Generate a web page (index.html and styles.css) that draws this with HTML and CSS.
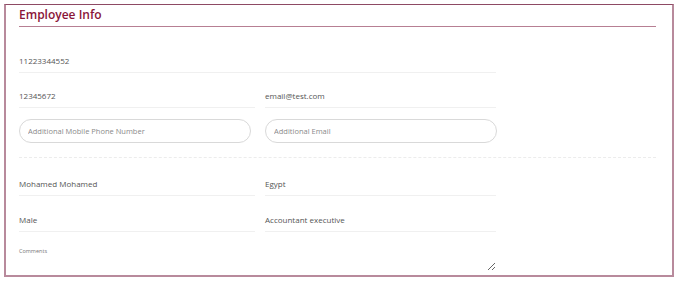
FILE: index.html
```html
<!DOCTYPE html>
<html>
<head>
<meta charset="utf-8">
<link rel="stylesheet" href="styles.css">
</head>
<body>
<section class="card">
  <h2 class="card-title">Employee Info</h2>
  <div class="grid">
    <div class="field span2">11223344552</div>
    <div class="field">12345672</div>
    <div class="field">email@test.com</div>
    <div class="input-wrap"><input class="pill pill-left" type="text" placeholder="Additional Mobile Phone Number"></div>
    <div class="input-wrap"><input class="pill" type="text" placeholder="Additional Email"></div>
  </div>
  <hr class="divider">
  <div class="grid second">
    <div class="field">Mohamed Mohamed</div>
    <div class="field">Egypt</div>
    <div class="field">Male</div>
    <div class="field">Accountant executive</div>
  </div>
  <div class="comments">
    <label class="comments-label">Comments</label>
    <textarea class="comments-box"></textarea>
  </div>
</section>
</body>
</html>
```
FILE: styles.css
```css
html, body {
  margin: 0;
  padding: 0;
  background: #fff;
}
body {
  font-family: "Open Sans", "Noto Sans", sans-serif;
  padding: 4px 2px 4px 4px;
}
.card {
  box-sizing: border-box;
  width: 670px;
  height: 273px;
  border: 2px solid #b88a9c;
  border-top: 1px solid #8e4a64;
  padding: 0 16px 0 11px;
  overflow: hidden;
}
.card-title {
  margin: 0 0 0 2px;
  font-size: 12px;
  font-weight: 600;
  line-height: 18px;
  color: #8a1538;
  padding: 1px 0 2px;
  border-bottom: 1px solid #b77f93;
}
.grid {
  display: grid;
  grid-template-columns: 236px 231px;
  column-gap: 10px;
  margin-left: 2px;
}
.span2 {
  grid-column: 1 / 3;
}
.field {
  font-size: 8px;
  line-height: 14px;
  color: #555;
  padding: 16px 0 4px;
  border-bottom: 1px solid #f0f0f0;
}
.field.span2 {
  margin-top: 11px;
}
.input-wrap {
  margin-top: 9px;
}
.pill {
  box-sizing: border-box;
  width: 232px;
  height: 24px;
  border: 1px solid #d9d9d9;
  border-radius: 12px;
  padding: 0 8px;
  font-family: "Open Sans", "Noto Sans", sans-serif;
  font-size: 7.5px;
  color: #444;
  outline: none;
  background: #fff;
}
.pill::placeholder {
  color: #8a8a8a;
}
.divider {
  margin: 14px 0 0 2px;
  border: 0;
  border-top: 1px dashed #ececec;
  height: 0;
}
.second {
  margin-top: 3px;
}
.second .field:nth-child(n+3) {
  padding-top: 17px;
}
.comments {
  margin: 15px 0 0 2px;
  width: 477px;
  display: flex;
  flex-direction: column;
}
.comments-label {
  font-size: 5.5px;
  color: #777;
  line-height: 8px;
}
.comments-box {
  box-sizing: border-box;
  width: 477px;
  height: 16px;
  border: 0;
  padding: 0;
  resize: vertical;
  outline: none;
}
```
